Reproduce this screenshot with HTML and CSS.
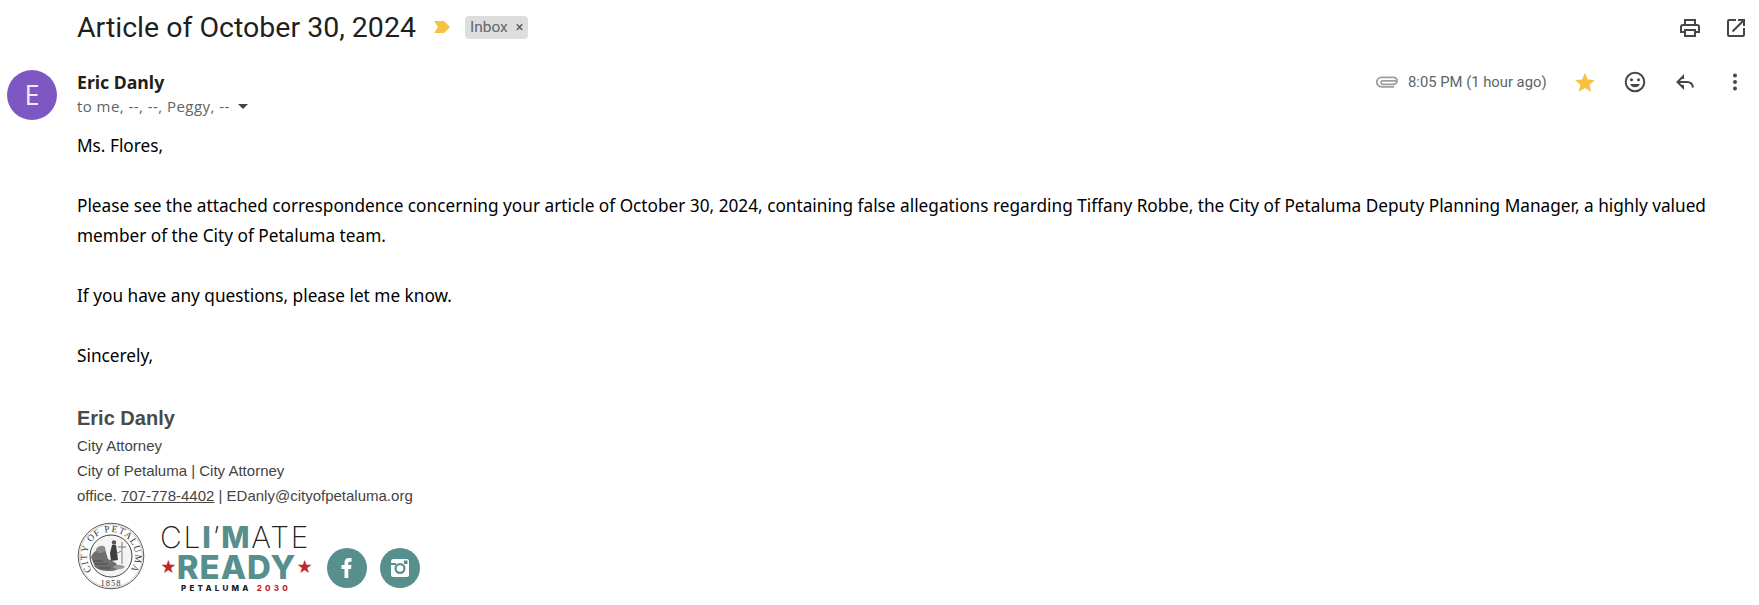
FILE: index.html
```html
<!DOCTYPE html>
<html lang="en">
<head>
<meta charset="utf-8">
<title>Article of October 30, 2024</title>
<link rel="stylesheet" href="styles.css">
</head>
<body>
<header class="subject-bar">
  <div class="subject">
    <h1 class="subject-title">Article of October 30, 2024</h1>
    <svg class="marker" viewBox="0 0 16 12" width="16" height="12"><path d="M0 0h10l6 6-6 6H0l4-6z" fill="#f6c242"/></svg>
    <span class="chip">Inbox <span class="chip-x">×</span></span>
  </div>
  <div class="subject-tools">
    <svg class="tool" viewBox="0 0 24 24" width="24" height="24"><path d="M19 8h-1V3H6v5H5a3 3 0 0 0-3 3v6h4v4h12v-4h4v-6a3 3 0 0 0-3-3zM8 5h8v3H8zm8 14H8v-4h8zm4-4h-2v-2H6v2H4v-4a1 1 0 0 1 1-1h14a1 1 0 0 1 1 1z" fill="#444746"/></svg>
    <svg class="tool" viewBox="0 0 24 24" width="24" height="24"><path d="M19 19H5V5h7V3H5a2 2 0 0 0-2 2v14a2 2 0 0 0 2 2h14a2 2 0 0 0 2-2v-7h-2zM14 3v2h3.600l-9.800 9.800 1.400 1.400L19 6.400V10h2V3z" fill="#444746"/></svg>
  </div>
</header>
<div class="message">
  <div class="avatar">E</div>
  <div class="message-main">
    <div class="message-head">
      <div class="people">
        <div class="sender">Eric Danly</div>
        <div class="recipients">to me, --, --, Peggy, -- <span class="caret"></span></div>
      </div>
      <div class="meta">
        <svg class="clip" viewBox="0 0 22 12" width="22" height="12"><path d="M20.500 4.800H6.200a2 2 0 0 0 0 3.600h11.600M17.500 10.800H5.500a4.600 4.600 0 0 1 0-9.400h12.200a3.400 3.400 0 0 1 0 6.800" fill="none" stroke="#9e9e9e" stroke-width="1.800" stroke-linecap="round"/></svg>
        <span class="time">8:05 PM (1 hour ago)</span>
        <svg class="star" viewBox="0 0 24 24" width="24" height="24"><path d="M12 2.800l2.900 6.600 7.100.7-5.400 4.700 1.600 7-6.200-3.700-6.200 3.700 1.600-7L2 10.100l7.100-.7z" fill="#f6c242"/></svg>
        <svg class="act" viewBox="0 0 24 24" width="24" height="24"><circle cx="12" cy="12" r="9.300" fill="none" stroke="#444746" stroke-width="2"/><circle cx="8.500" cy="9.800" r="1.500" fill="#444746"/><circle cx="15.500" cy="9.800" r="1.500" fill="#444746"/><path d="M7.200 14a5.200 5.200 0 0 0 9.600 0z" fill="#444746"/></svg>
        <svg class="act" viewBox="0 0 24 24" width="24" height="24"><path d="M10 9V6.500L4.500 12l5.500 5.500V15M5 12h9c3.500 0 5.500 2 6 5.500" fill="none" stroke="#444746" stroke-width="2"/></svg>
        <svg class="act" viewBox="0 0 24 24" width="24" height="24"><circle cx="12" cy="5.500" r="2" fill="#444746"/><circle cx="12" cy="12" r="2" fill="#444746"/><circle cx="12" cy="18.500" r="2" fill="#444746"/></svg>
      </div>
    </div>
    <div class="body-text">
      <p>Ms. Flores,</p>
      <p>Please see the attached correspondence concerning your article of October 30, 2024, containing false allegations regarding Tiffany Robbe, the City of Petaluma Deputy Planning Manager, a highly valued member of the City of Petaluma team.</p>
      <p>If you have any questions, please let me know.</p>
      <p>Sincerely,</p>
    </div>
    <div class="signature">
      <div class="sig-name">Eric Danly</div>
      <div class="sig-line">City Attorney</div>
      <div class="sig-line">City of Petaluma | City Attorney</div>
      <div class="sig-line">office. <u>707-778-4402</u> | EDanly@cityofpetaluma.org</div>
    </div>
    <div class="logos">
      <svg class="seal" viewBox="0 0 68 68" width="68" height="68">
        <defs>
          <path id="sealTop" d="M15.600 49.400a24 24 0 1 1 36.800 0"/>
        </defs>
        <circle cx="34" cy="34" r="32.800" fill="#fff" stroke="#5a5a5a" stroke-width="1"/>
        <circle cx="34" cy="34" r="31.400" fill="none" stroke="#a0a0a0" stroke-width=".5"/>
        <circle cx="34" cy="34" r="21" fill="#f4f4f4" stroke="#444" stroke-width="1"/>
        <path d="M14 35c3-7 9-9 14-8l3 10 8 4 3 6c-6 3-19 3-24-2z" fill="#6f6f6f"/>
        <path d="M19 27c3-4 7-4 9-2 1 3-1 6-4 6s-5-1-5-4z" fill="#8b8b8b"/>
        <path d="M35 23h4l1 7 1 8-7 1-1-8z" fill="#3f3f3f"/>
        <circle cx="37" cy="20.500" r="2.200" fill="#555"/>
        <path d="M45 20v22M41 25h8M44 29l-5 3" fill="none" stroke="#777" stroke-width="1"/>
        <path d="M36 45c3-3 9-3 12 0-3 3-9 3-12 0z" fill="#9a9a9a"/>
        <path d="M16 39h10M18 42h13M22 46h11" stroke="#3a3a3a" stroke-width=".7"/>
        <text class="seal-text"><textPath href="#sealTop" startOffset="50%" text-anchor="middle">CITY OF PETALUMA</textPath></text>
        <text class="seal-year" x="34" y="64" text-anchor="middle">1858</text>
      </svg>
      <div class="climate">
        <div class="climate-top">CL<span class="climate-im">I</span>’<span class="climate-im">M</span>ATE</div>
        <div class="climate-ready"><span class="climate-star">★</span><span class="climate-word">READY</span><span class="climate-star">★</span></div>
        <div class="climate-sub">PETALUMA <span class="climate-year">2030</span></div>
      </div>
      <div class="social">
        <svg viewBox="0 0 40 40" width="40" height="40"><circle cx="20" cy="20" r="20" fill="#568f8c"/><path d="M17.500 30V21h-3v-4h3v-2.500c0-3 1.700-4.500 4.300-4.500h2.700v3.800h-1.800c-1.100 0-1.400.5-1.400 1.400V17h3.200l-.5 4h-2.700v9z" fill="#fff"/></svg>
        <svg viewBox="0 0 40 40" width="40" height="40"><circle cx="20" cy="20" r="20" fill="#568f8c"/><rect x="11" y="11" width="18" height="18" rx="2.500" fill="#fff"/><circle cx="20" cy="20.500" r="5.500" fill="#568f8c"/><circle cx="20" cy="20.500" r="3.300" fill="#fff"/><rect x="11" y="15" width="5" height="2" fill="#568f8c"/><rect x="24" y="12.500" width="3.500" height="3.500" fill="#568f8c"/></svg>
      </div>
    </div>
  </div>
</div>
</body>
</html>
```
FILE: styles.css
```css
* { box-sizing: border-box; }
html, body { margin: 0; padding: 0; background: #fff; }
body { width: 1759px; height: 605px; overflow: hidden; font-family: Roboto, sans-serif; color: #1f1f1f; }

.subject-bar { display: flex; justify-content: space-between; align-items: center; height: 54px; padding: 0 4px 0 77px; }
.subject { display: flex; align-items: center; }
.subject-title { margin: 0; padding-top: 1px; font-family: Roboto, sans-serif; font-weight: 400; font-size: 28.500px; line-height: 54px; color: #1f1f1f; }
.marker { margin-left: 18px; }
.chip { margin-left: 15px; height: 23px; padding: 0 5px; display: flex; align-items: center; gap: 4px; background: #dddddd; border-radius: 4px; font-size: 15.500px; color: #666; white-space: pre; }
.chip-x { font-size: 14px; color: #555; }
.subject-tools { display: flex; gap: 22px; align-items: center; padding: 2px 7px 0 0; }
.tool { display: block; }

.message { display: flex; padding: 0 0 0 7px; }
.avatar { flex: none; width: 50px; height: 50px; margin-top: 16px; border-radius: 50%; background: #7e57c2; color: #f1e9fb; font-family: "Open Sans", sans-serif; font-size: 27px; line-height: 50px; text-align: center; }
.message-main { flex: 1; min-width: 0; margin-left: 20px; padding-top: 16px; }

.message-head { display: flex; justify-content: space-between; height: 61px; }
.sender { font-family: "Noto Sans", sans-serif; font-weight: 700; font-size: 17.700px; line-height: 24px; color: #1f1f1f; }
.recipients { font-family: "Open Sans", sans-serif; font-size: 15px; letter-spacing: .45px; line-height: 25px; color: #5f6368; display: flex; align-items: center; white-space: pre; }
.caret { margin-left: 4px; width: 0; height: 0; border-left: 5px solid transparent; border-right: 5px solid transparent; border-top: 5px solid #444; }
.meta { display: flex; align-items: center; height: 24px; padding-right: 12px; }
.clip { margin-right: 10px; }
.time { font-size: 14.800px; color: #5f6368; width: 138px; white-space: pre; }
.star { margin-left: 27px; }
.act { margin-left: 26px; }

.body-text { display: flow-root; font-family: "Noto Sans", sans-serif; font-size: 17.230px; line-height: 30px; color: #000; padding-right: 30px; }
.body-text p { margin: 0 0 30px; }

.signature { margin-top: 2px; font-family: "Liberation Sans", sans-serif; color: #444; }
.sig-name { font-weight: 700; font-size: 20px; line-height: 30px; color: #4a4a48; }
.sig-line { font-size: 15px; line-height: 25px; }

.logos { display: flex; align-items: flex-start; margin-top: 14px; }
.seal { display: block; flex: none; }
.seal-text { font-family: "Liberation Serif", serif; font-size: 9.500px; letter-spacing: 1px; fill: #333; }
.seal-year { font-family: "Liberation Serif", serif; font-size: 8.500px; letter-spacing: 1px; fill: #333; }
.climate { margin-left: 15px; width: 152px; font-family: Inter, sans-serif; }
.climate-top { font-size: 30px; line-height: 30px; font-weight: 200; color: #222; white-space: pre; letter-spacing: 1.800px; }
.climate-im { font-weight: 800; color: #568f8c; }
.climate-ready { display: flex; align-items: center; justify-content: space-between; height: 30px; color: #568f8c; }
.climate-word { font-size: 33px; line-height: 30px; font-weight: 800; letter-spacing: 1px; }
.climate-star { font-size: 16px; color: #c0272d; }
.climate-sub { font-size: 8px; line-height: 12px; font-weight: 800; letter-spacing: 3.200px; text-align: center; color: #222; white-space: pre; }
.climate-year { color: #c0272d; }
.social { display: flex; gap: 13px; margin: 26px 0 0 15px; }
.social svg { display: block; }
```
